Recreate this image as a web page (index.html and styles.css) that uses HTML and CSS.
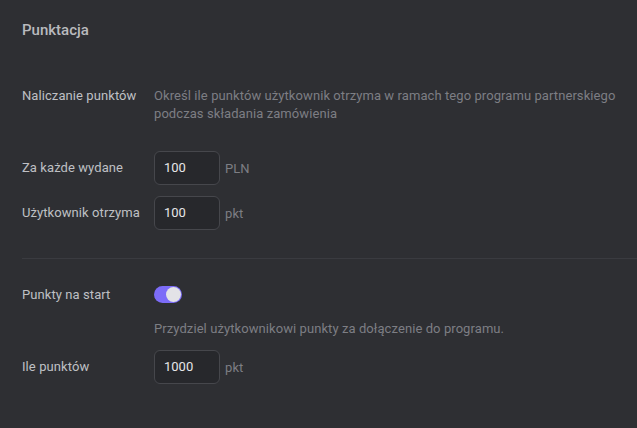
FILE: index.html
```html
<!DOCTYPE html>
<html lang="pl">
<head>
<meta charset="utf-8">
<link rel="stylesheet" href="styles.css">
</head>
<body>
<div class="page">
  <h1 class="title">Punktacja</h1>
  <section class="section first">
    <div class="row text-row">
      <div class="label">Naliczanie punktów</div>
      <div class="desc">Określ ile punktów użytkownik otrzyma w ramach tego programu partnerskiego podczas składania zamówienia</div>
    </div>
    <div class="row field-row gap-lg">
      <div class="label">Za każde wydane</div>
      <div class="control"><div class="input">100</div><span class="unit">PLN</span></div>
    </div>
    <div class="row field-row gap-sm">
      <div class="label">Użytkownik otrzyma</div>
      <div class="control"><div class="input">100</div><span class="unit">pkt</span></div>
    </div>
  </section>
  <hr class="sep">
  <section class="section second">
    <div class="row text-row">
      <div class="label">Punkty na start</div>
      <div class="control"><span class="toggle"><span class="knob"></span></span></div>
    </div>
    <div class="row text-row gap-md">
      <div class="label"></div>
      <div class="desc">Przydziel użytkownikowi punkty za dołączenie do programu.</div>
    </div>
    <div class="row field-row gap-sm2">
      <div class="label">Ile punktów</div>
      <div class="control"><div class="input">1000</div><span class="unit">pkt</span></div>
    </div>
  </section>
</div>
</body>
</html>
```

FILE: styles.css
```css
html, body {
  margin: 0;
  padding: 0;
  background: #2e2f33;
}
body {
  font-family: Roboto, "Liberation Sans", sans-serif;
  font-size: 13px;
  letter-spacing: 0.08px;
  color: #bfc0c4;
  width: 637px;
  height: 428px;
  overflow: hidden;
}
.page {
  padding: 20px 0 0 22px;
}
.title {
  margin: 0;
  font-size: 15px;
  line-height: 20px;
  font-weight: 500;
  color: #b9babe;
  letter-spacing: 0;
}
.section {
  display: flex;
  flex-direction: column;
}
.section.first {
  margin-top: 47px;
}
.row {
  display: grid;
  grid-template-columns: 132px 1fr;
  align-items: center;
}
.text-row {
  align-items: start;
  line-height: 18px;
}
.field-row {
  height: 34px;
}
.gap-lg { margin-top: 28px; }
.gap-sm { margin-top: 11px; }
.gap-md { margin-top: 16px; }
.gap-sm2 { margin-top: 12px; }
.label {
  line-height: 18px;
  color: #bfc0c4;
}
.desc {
  color: #7d7e84;
  max-width: 480px;
  line-height: 18px;
}
.control {
  display: flex;
  align-items: center;
  gap: 5px;
}
.input {
  box-sizing: border-box;
  width: 66px;
  height: 34px;
  border: 1px solid #46474c;
  border-radius: 6px;
  background: #27282c;
  color: #e6e6e8;
  padding-left: 9px;
  line-height: 32px;
  letter-spacing: 0;
}
.unit {
  color: #7d7e84;
}
.sep {
  margin: 28px 0 0 0;
  border: 0;
  border-top: 1px solid #3a3b40;
  height: 0;
}
.section.second {
  margin-top: 27px;
}
.toggle {
  display: flex;
  align-items: center;
  justify-content: flex-end;
  box-sizing: border-box;
  width: 28px;
  height: 17px;
  padding: 0 1px;
  border-radius: 9px;
  background: #7c6cf8;
}
.knob {
  width: 15px;
  height: 15px;
  border-radius: 50%;
  background: #e3e3e7;
}
```
